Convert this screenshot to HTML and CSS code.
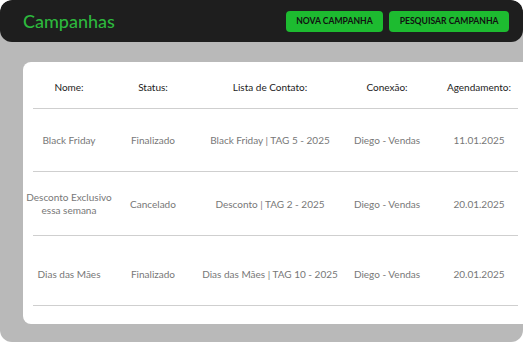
FILE: index.html
```html
<!DOCTYPE html>
<html lang="pt-BR">
<head>
    <meta charset="UTF-8">
    <title>Campanhas</title>
    <link rel="stylesheet" href="styles.css">
</head>
<body>
    <div class="page">
        <div class="topbar">
            <h1 class="title">Campanhas</h1>
            <div class="actions">
                <button class="btn">NOVA CAMPANHA</button>
                <button class="btn">PESQUISAR CAMPANHA</button>
            </div>
        </div>
        <div class="content">
            <div class="card">
                <div class="row head">
                    <div class="cell">Nome:</div>
                    <div class="cell">Status:</div>
                    <div class="cell">Lista de Contato:</div>
                    <div class="cell">Conexão:</div>
                    <div class="cell">Agendamento:</div>
                </div>
                <div class="row r1">
                    <div class="cell">Black Friday</div>
                    <div class="cell">Finalizado</div>
                    <div class="cell">Black Friday | TAG 5 - 2025</div>
                    <div class="cell">Diego - Vendas</div>
                    <div class="cell">11.01.2025</div>
                </div>
                <div class="row r2">
                    <div class="cell">Desconto Exclusivo<br>essa semana</div>
                    <div class="cell">Cancelado</div>
                    <div class="cell">Desconto | TAG 2 - 2025</div>
                    <div class="cell">Diego - Vendas</div>
                    <div class="cell">20.01.2025</div>
                </div>
                <div class="row r3">
                    <div class="cell">Dias das Mães</div>
                    <div class="cell">Finalizado</div>
                    <div class="cell">Dias das Mães | TAG 10 - 2025</div>
                    <div class="cell">Diego - Vendas</div>
                    <div class="cell">20.01.2025</div>
                </div>
            </div>
        </div>
    </div>
</body>
</html>
```

FILE: styles.css
```css
* {
    margin: 0;
    padding: 0;
    box-sizing: border-box;
}
body {
    background: #fff;
    font-family: Lato, "Noto Sans", sans-serif;
}
.page {
    width: 100%;
    height: 342px;
    background: #b9b9b9;
    border-radius: 12px;
    overflow: hidden;
}
.topbar {
    height: 42px;
    background: #1e1e1e;
    border-radius: 12px;
    display: flex;
    align-items: center;
    justify-content: space-between;
    padding: 0 14px 0 23px;
}
.title {
    color: #2db83d;
    font-size: 18px;
    font-weight: 500;
}
.actions {
    display: flex;
    gap: 6px;
}
.btn {
    height: 21px;
    padding: 0 10.5px;
    border: none;
    border-radius: 4px;
    background: #1dbb30;
    color: #111;
    font-family: Lato, "Noto Sans", sans-serif;
    font-size: 8.6px;
    font-weight: 700;
}
.content {
    padding: 20px 0 0 23px;
}
.card {
    width: 510px;
    background: #fff;
    border-radius: 8px;
    padding-bottom: 18px;
}
.row {
    display: grid;
    grid-template-columns: 92px 76px 158px 76px 108px;
    align-items: center;
    text-align: center;
    font-size: 10px;
    line-height: 13px;
    color: #777;
    background: linear-gradient(#cfcfcf, #cfcfcf) 10px 100% / calc(100% - 25px) 1px no-repeat;
}
.row.head {
    height: 47px;
    padding-top: 3px;
    color: #222;
}
.row.r1 {
    height: 63px;
}
.row.r2 {
    height: 64px;
}
.row.r3 {
    height: 70px;
    padding-top: 6px;
}
```
